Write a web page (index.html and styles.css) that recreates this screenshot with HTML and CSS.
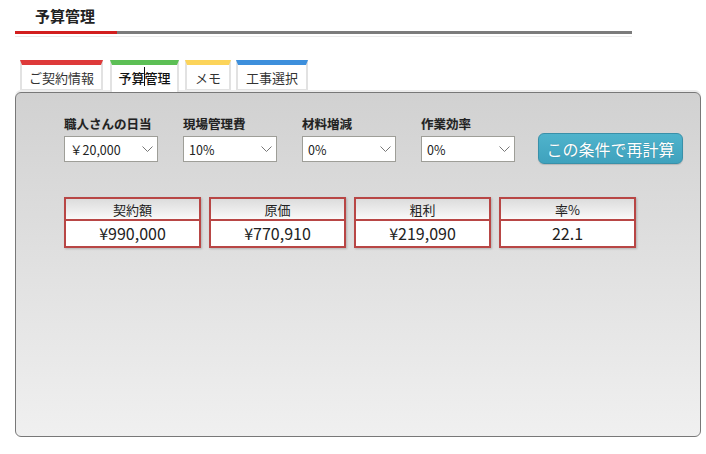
FILE: index.html
```html
<!DOCTYPE html>
<html lang="ja">
<head>
<meta charset="utf-8">
<title>予算管理</title>
<link rel="stylesheet" href="styles.css">
</head>
<body>
<div class="page">
  <header class="head">
    <h1 class="title">予算管理</h1>
    <div class="bar"><span class="bar-red"></span><span class="bar-gray"></span></div>
    <div class="bar-light"></div>
  </header>

  <nav class="tabs">
    <div class="tab tab-red">ご契約情報</div>
    <div class="tab tab-green active">予算管理<span class="ibeam"></span></div>
    <div class="tab tab-yellow">メモ</div>
    <div class="tab tab-blue">工事選択</div>
  </nav>

  <section class="panel">
    <div class="conditions">
      <div class="field">
        <div class="label">職人さんの日当</div>
        <div class="select"><span>￥20,000</span><svg class="chev" width="11" height="7" viewBox="0 0 11 7"><polyline points="0.5,0.5 5.5,5.5 10.5,0.5" fill="none" stroke="#777" stroke-width="1"/></svg></div>
      </div>
      <div class="field">
        <div class="label">現場管理費</div>
        <div class="select"><span>10%</span><svg class="chev" width="11" height="7" viewBox="0 0 11 7"><polyline points="0.5,0.5 5.5,5.5 10.5,0.5" fill="none" stroke="#777" stroke-width="1"/></svg></div>
      </div>
      <div class="field">
        <div class="label">材料増減</div>
        <div class="select"><span>0%</span><svg class="chev" width="11" height="7" viewBox="0 0 11 7"><polyline points="0.5,0.5 5.5,5.5 10.5,0.5" fill="none" stroke="#777" stroke-width="1"/></svg></div>
      </div>
      <div class="field">
        <div class="label">作業効率</div>
        <div class="select"><span>0%</span><svg class="chev" width="11" height="7" viewBox="0 0 11 7"><polyline points="0.5,0.5 5.5,5.5 10.5,0.5" fill="none" stroke="#777" stroke-width="1"/></svg></div>
      </div>
      <button class="recalc">この条件で再計算</button>
    </div>

    <div class="results">
      <div class="box"><div class="box-head">契約額</div><div class="box-val">¥990,000</div></div>
      <div class="box"><div class="box-head">原価</div><div class="box-val">¥770,910</div></div>
      <div class="box"><div class="box-head">粗利</div><div class="box-val">¥219,090</div></div>
      <div class="box"><div class="box-head">率%</div><div class="box-val">22.1</div></div>
    </div>
  </section>
</div>
</body>
</html>
```

FILE: styles.css
```css
* { box-sizing: border-box; }
html, body { margin: 0; padding: 0; background: #fff; }
body {
  font-family: "Noto Sans CJK JP", "Noto Sans", sans-serif;
  color: #222;
}
.page { padding: 0 6px 0 15px; width: 706px; }

.head { width: 617px; }
.title {
  margin: 0;
  padding: 6px 0 0 20px;
  height: 31px;
  font-size: 15px;
  line-height: 20px;
  font-weight: bold;
  color: #222;
}
.bar { display: flex; height: 3px; }
.bar-red { width: 102px; background: #d21e1e; }
.bar-gray { flex: 1; background: #7b7b7b; }
.bar-light { height: 1px; margin-top: 2px; background: #ececec; }

.tabs {
  display: flex;
  margin: 23px 0 0 5px;
  height: 30px;
}
.tab {
  position: relative;
  height: 30px;
  border-top: 5px solid #ccc;
  border-left: 2px solid #e2e2e2;
  border-right: 2px solid #e2e2e2;
  border-bottom: 1px solid #e2e2e2;
  background: #fff;
  font-size: 13px;
  line-height: 26px;
  text-align: center;
  color: #333;
}
.tab-red { width: 83px; border-top-color: #de3a3a; margin-right: 7px; }
.tab-green { width: 69px; border-top-color: #5cbf55; margin-right: 6px; }
.tab-yellow { width: 46px; border-top-color: #fcd45a; margin-right: 5px; }
.tab-blue { width: 72px; border-top-color: #3d8fdc; }
.tab.active { height: 32px; border-bottom: none; color: #111; font-weight: 500; z-index: 1; }
.ibeam {
  position: absolute;
  left: 32px;
  top: 2px;
  width: 1px;
  height: 19px;
  background: #111;
}

.panel {
  margin-top: 2px;
  width: 686px;
  height: 345px;
  border: 1px solid #787878;
  border-radius: 6px;
  background: linear-gradient(#d1d1d1, #f0f0f0);
  box-shadow: 0 -2px 0 #ececec;
  padding: 23px 0 0 48px;
}

.conditions { display: flex; align-items: flex-start; }
.field { width: 94px; margin-right: 25px; }
.field:nth-child(4) { margin-right: 23px; }
.label {
  font-size: 12.5px;
  font-weight: bold;
  line-height: 16px;
  color: #222;
  text-shadow: 0 0 1px rgba(0,0,0,0.15);
  margin-bottom: 4px;
  white-space: nowrap;
}
.select {
  height: 26px;
  background: #fff;
  border: 1px solid #9e9e98;
  display: flex;
  align-items: center;
  justify-content: space-between;
  padding: 0 4px 0 5px;
  font-size: 12.5px;
  color: #222;
}
.chev { margin-top: 1px; }

.recalc {
  margin-top: 17px;
  width: 145px;
  height: 31px;
  border: 1px solid #3990a9;
  border-radius: 6px;
  background: linear-gradient(#4fb3cc, #3fa2bd);
  color: #fff;
  font-family: "Noto Sans CJK JP", sans-serif;
  font-size: 16px;
  line-height: 28px;
  padding: 0;
  text-shadow: 0 0 1px rgba(0,0,0,0.25);
  box-shadow: 0 1px 1px rgba(0,0,0,0.15);
}

.results { display: flex; gap: 8px; margin-top: 33px; }
.box {
  width: 137px;
  border: 2px solid #b84645;
  box-shadow: 1px 1px 2px rgba(0,0,0,0.2);
}
.box-head {
  height: 22px;
  border-bottom: 2px solid #b84645;
  background: linear-gradient(#dcdcdc, #f9f9f9);
  font-size: 13px;
  line-height: 21px;
  text-align: center;
  color: #222;
}
.box-val {
  height: 25px;
  background: #fff;
  font-size: 16px;
  line-height: 25px;
  text-align: center;
  color: #222;
}
```
